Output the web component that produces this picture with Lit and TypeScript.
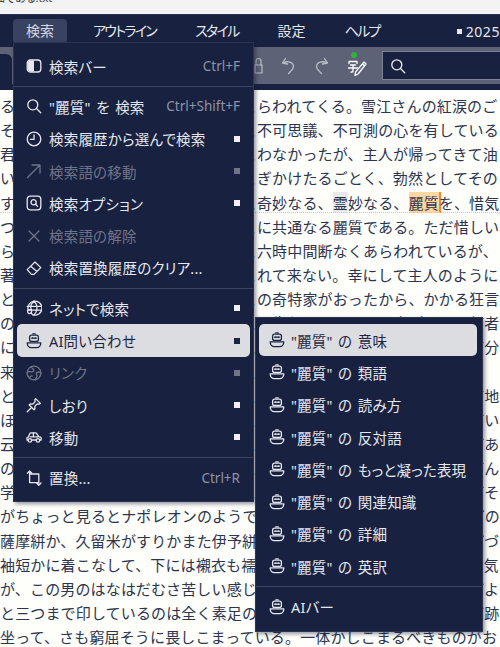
import { LitElement, html, css, svg } from "lit";
import { customElement } from "lit/decorators.js";

const icons: Record<string, any> = {
  panel: svg`<rect x="1.2" y="2" width="13.6" height="12" rx="3"/><path d="M8 2.6H4.2a2.4 2.4 0 0 0-2.4 2.4v6a2.4 2.4 0 0 0 2.4 2.4H8z" fill="currentColor" stroke="none"/>`,
  search: svg`<circle cx="6.8" cy="6.8" r="5"/><path d="M10.5 10.5l4.2 4.2"/>`,
  clock: svg`<circle cx="8" cy="8" r="6.8"/><path d="M8 3.8v4.6H4.4"/>`,
  arrow: svg`<path d="M1.5 14.5L14 2M6 2h8v8"/>`,
  option: svg`<rect x="1.2" y="1.2" width="13.6" height="13.6" rx="3"/><circle cx="7.6" cy="7.2" r="2.6"/><path d="M9.5 9.2l2 2"/>`,
  x: svg`<path d="M3 3l10 10M13 3L3 13"/>`,
  eraser: svg`<path d="M1.2 9.6L9 2l5.8 5.6L8 14.4H5.4zM4.6 6.2l6.4 5.4"/>`,
  net: svg`<path d="M2.2 10A7 7 0 1 1 7 14.9"/><path d="M1.2 6.4h13.6M2 10.2h13M8 1c-4 4-3.4 7.5-2.4 9M8 1c4 4 4 10 0 14"/><circle cx="3.6" cy="11.6" r="2"/><path d="M5 13l1.6 1.6"/>`,
  robot: svg`<rect x="3.6" y="2.2" width="8.8" height="6.2" rx="2"/><path d="M6.8 .9h2.4"/><path d="M6.1 5.2h.9M9 5.2h.9" stroke-width="1.8"/><path d="M1.2 9.8h13.6c0 2.8-1.8 4.9-4.2 4.9H5.4c-2.4 0-4.2-2.1-4.2-4.9z"/>`,
  world: svg`<circle cx="8" cy="8" r="6.9"/><path d="M5 1.8c1 2 3 2 3 3.6S5 7 3.6 6.6 1.4 7 1.4 8M15 8c-2-1.4-4-1.2-4.6 0s1 2 .6 3.4-1.4 2-1.6 3.4M3.4 13c.6-1.8 1.8-2.4 3-2"/>`,
  pin: svg`<path d="M9.6 1.6l4.8 4.8-1.4.8-1.6-.4-2.6 2.6.2 2.4-1 1-4.8-4.8 1-1 2.4.2L9.2 4.6l-.4-1.6zM4.8 11.2L1.2 14.8"/>`,
  car: svg`<path d="M1 11V8.6l1.4-.6 1.4-3.4c.2-.5.6-.8 1.2-.8h4.4c.5 0 .9.2 1.2.6L12.6 7.6l2 .6c.4.2.6.5.6 1V11h-1.4M5.8 11h4.4M1 11h1"/><path d="M4 7.8h8M7.4 4v3.8"/><circle cx="3.9" cy="11.4" r="1.7"/><circle cx="12" cy="11.4" r="1.7"/>`,
  replace: svg`<path d="M3.6 1v3h9.2v9M3.6 4v8.6h9.2M1.4 3.2L3.6 1l2.2 2.2M10.6 13l2.2 2.2L15 13"/>`,
  undo: svg`<path d="M5 2.5L2 7l5 1M2.2 7c5-2.5 10.5-1 10.8 3.5.1 2-1.5 3.5-3 5l-2 2"/>`,
  redo: svg`<path d="M13 2.5L16 7l-5 1M15.8 7c-5-2.5-10.5-1-10.8 3.5-.1 2 1.5 3.5 3 5l2 2"/>`,
};

const icon = (name: string) =>
  html`<svg class="ico" viewBox="0 0 16 16" fill="none" stroke="currentColor" stroke-width="1.3" stroke-linecap="round" stroke-linejoin="round">${icons[name]}</svg>`;

type Row = { i?: string; t?: string; k?: string; m?: boolean; off?: boolean; sel?: boolean; sep?: boolean };

const mainMenu: Row[] = [
  { i: "panel", t: "検索バー", k: "Ctrl+F" },
  { sep: true },
  { i: "search", t: "\"麗質\" を 検索", k: "Ctrl+Shift+F" },
  { i: "clock", t: "検索履歴から選んで検索", m: true },
  { i: "arrow", t: "検索語の移動", m: true, off: true },
  { i: "option", t: "検索オプション", m: true },
  { i: "x", t: "検索語の解除", off: true },
  { i: "eraser", t: "検索置換履歴のクリア..." },
  { sep: true },
  { i: "net", t: "ネットで検索", m: true },
  { i: "robot", t: "AI問い合わせ", m: true, sel: true },
  { i: "world", t: "リンク", m: true, off: true },
  { i: "pin", t: "しおり", m: true },
  { i: "car", t: "移動", m: true },
  { sep: true },
  { i: "replace", t: "置換...", k: "Ctrl+R" },
];

const subMenu: Row[] = [
  { i: "robot", t: "\"麗質\" の 意味", sel: true },
  { i: "robot", t: "\"麗質\" の 類語" },
  { i: "robot", t: "\"麗質\" の 読み方" },
  { i: "robot", t: "\"麗質\" の 反対語" },
  { i: "robot", t: "\"麗質\" の もっと凝った表現" },
  { i: "robot", t: "\"麗質\" の 関連知識" },
  { i: "robot", t: "\"麗質\" の 詳細" },
  { i: "robot", t: "\"麗質\" の 英訳" },
  { sep: true },
  { i: "robot", t: "AIバー" },
];

const FILL =
  "吾輩は猫である名前はまだ無いどこで生れたかとんと見当がつかぬ何でも薄暗いじめじめした所でニャーニャー泣いていた事だけは記憶している吾輩はここで始めて人間というものを見た";
const pad = (a: string, b: string, n = 33) => a + FILL.slice(0, Math.max(0, n - a.length - b.length)) + b;

const lines: string[] = [
  pad("る", "らわれてくる。雪江さんの紅涙のご"),
  pad("そ", "不可思議、不可測の心を有している"),
  pad("君", "わなかったが、主人が帰ってきて油"),
  pad("い", "ぎかけたるごとく、勃然としてその"),
  "",
  pad("つ", "に共通なる麗質である。ただ惜しい"),
  pad("ら", "六時中間断なくあらわれているが、"),
  pad("著", "れて来ない。幸にして主人のように"),
  pad("と", "の奇特家がおったから、かかる狂言"),
  pad("の", "者"),
  pad("に", "分"),
  pad("来", "", 20),
  pad("と", "地"),
  pad("ほ", "い"),
  pad("云", "あ"),
  pad("の", "ん"),
  pad("学", "そ"),
  pad("がちょっと見るとナポレオンのようで", "の"),
  pad("薩摩絣か、久留米がすりかまた伊予絣", "づ"),
  pad("袖短かに着こなして、下には襯衣も襦", "気"),
  pad("が、この男のはなはだむさ苦しい感じ", "よ"),
  pad("と三つまで印しているのは全く素足の", "跡"),
  "坐って、さも窮屈そうに畏しこまっている。一体かしこまるべきものがお",
];

@customElement("app-root")
export class AppRoot extends LitElement {
  static styles = css`
    :host {
      display: block;
      position: relative;
      width: 500px;
      height: 647px;
      overflow: hidden;
      background: #fefefa;
      font-family: "Noto Sans", "Noto Sans CJK JP", sans-serif;
    }
    .title {
      height: 14px;
      background: #f3f3f3;
      overflow: hidden;
      font-size: 11px;
      line-height: 14px;
      color: #333;
      font-feature-settings: "palt";
    }
    .title span { display: block; margin: -9px 0 0 -6px; }
    .menubar {
      height: 33px;
      box-sizing: border-box;
      padding: 4px 0 0 13px;
      background: #18213f;
      border-top: 1px solid #2b3350;
      display: flex;
      gap: 13px;
      color: #e6e8ee;
      font-size: 14px;
      font-feature-settings: "palt";
      white-space: nowrap;
    }
    .mi { height: 24px; line-height: 24px; padding: 0 13px; border-radius: 4px; }
    .mi.on { background: #3a4262; color: #d5d8e0; }
    .mi.kana { letter-spacing: -1.7px; }
    .year { margin-left: 51px; display: flex; align-items: center; height: 24px; gap: 4px; letter-spacing: .6px; }
    .year i { width: 5px; height: 5px; background: #e6e8ee; display: block; }
    .toolbar {
      height: 37px;
      background: #5e6277;
      position: relative;
      display: flex;
      align-items: center;
      color: #b9bcc8;
    }
    .tb-left { width: 12px; height: 30px; align-self: flex-end; background: #18213f; border-top-right-radius: 6px; }
    .tb-lock { width: 9px; height: 17px; margin-left: 242px; }
    .tb-icon { width: 19px; height: 19px; margin-left: 17px; }
    .tb-icon + .tb-icon { margin-left: 12px; }
    .tb-pen { position: relative; margin-left: 16px; width: 22px; height: 26px; color: #fff; display: block; }
    .dot { position: absolute; left: 5px; top: -1px; width: 6px; height: 6px; border-radius: 50%; background: #2fb43a; }
    .sbox {
      margin-left: 14px;
      flex: 1;
      height: 29px;
      box-sizing: border-box;
      background: #18213f;
      border: 1px solid #7d8194;
      border-right: 0;
      color: #f0f0f4;
      display: flex;
      align-items: center;
      padding-left: 7px;
    }
    .gap { height: 6px; background: #18213f; }
    .editor { padding-top: 4px; color: #2c3450; font-family: "Noto Sans CJK JP", sans-serif; font-size: 15px; letter-spacing: .15px; }
    .ln { height: 24.15px; line-height: 24.15px; white-space: nowrap; position: relative; }
    .ln.cur::after {
      content: "";
      position: absolute;
      left: 0;
      right: 0;
      top: 21px;
      border-bottom: 1px dotted #f2c48c;
    }
    .hl { background: #fcd7a3; box-shadow: 2px 0 0 #ee8a2e; }
    .hl2 { background: #e9e9ea; }
    .menu {
      position: absolute;
      box-sizing: border-box;
      background: #18213f;
      color: #e6e8ee;
      font-size: 14.5px;
      letter-spacing: .2px;
      word-spacing: 1.5px;
      font-feature-settings: "palt";
      box-shadow: 2px 2px 4px rgba(20, 25, 50, .45);
      border: 1px solid #2c3452;
    }
    .m1 { left: 13px; top: 42px; width: 241px; height: 460px; padding-top: 7px; }
    .m2 { left: 255px; top: 317px; width: 228px; height: 315px; padding-top: 6px; }
    .row {
      height: 32.3px;
      box-sizing: border-box;
      margin: 0 3px;
      padding: 0 10px 0 9px;
      display: flex;
      align-items: center;
      gap: 7px;
      border-radius: 5px;
      white-space: nowrap;
    }
    .m2 .row { margin: 0 5px 0 3px; padding-left: 10px; gap: 6px; }
    .row.off { color: #6f7489; }
    .row.sel { background: #dcdde0; color: #1d2545; }
    .ico { width: 16px; height: 16px; flex: none; display: block; }
    .ico-sm { width: 100%; height: 100%; }
    .txt { flex: 1; }
    .key { font-size: 13.5px; color: #8f94a6; letter-spacing: 0; }
    .mark { width: 6px; height: 6px; background: currentColor; }
    .sep { height: 8px; display: flex; align-items: center; }
    .sep::before { content: ""; flex: 1; height: 1px; background: #3c4463; }
    .row:not(.sel):not(.off) .mark { background: #eef0f4; }
  `;

  private rows(list: Row[]) {
    return list.map((r) =>
      r.sep
        ? html`<div class="sep"></div>`
        : html`<div class="row ${r.off ? "off" : ""} ${r.sel ? "sel" : ""}">
            ${icon(r.i!)}<span class="txt">${r.t}</span>
            ${r.k ? html`<span class="key">${r.k}</span>` : ""}
            ${r.m ? html`<span class="mark"></span>` : ""}
          </div>`
    );
  }

  render() {
    const cur = html`す${FILL.slice(0, 16)}奇妙なる、<span class="hl2">霊</span>妙なる、<span class="hl">麗質</span>を、惜気`;
    return html`
      <div class="title"><span>猫である.txt</span></div>
      <div class="menubar">
        <div class="mi on">検索</div>
        <div class="mi kana">アウトライン</div>
        <div class="mi kana">スタイル</div>
        <div class="mi">設定</div>
        <div class="mi kana">ヘルプ</div>
        <div class="year"><i></i>2025</div>
      </div>
      <div class="toolbar">
        <div class="tb-left"></div>
        <svg class="tb-lock" viewBox="0 0 9 17" fill="none" stroke="currentColor" stroke-width="1.2"><path d="M1 8h7v8H1zM2 8V4a2.5 2.5 0 0 1 5 0v4"/></svg>
        <svg class="tb-icon" viewBox="0 0 18 19" fill="none" stroke="currentColor" stroke-width="1.3" stroke-linecap="round" stroke-linejoin="round">${icons.undo}</svg>
        <svg class="tb-icon" viewBox="0 0 18 19" fill="none" stroke="currentColor" stroke-width="1.3" stroke-linecap="round" stroke-linejoin="round">${icons.redo}</svg>
        <div class="tb-pen">
          <span class="dot"></span>
          <svg class="ico-sm" viewBox="0 0 22 26" fill="none" stroke="currentColor" stroke-width="1.3" stroke-linecap="round" stroke-linejoin="round">
            <path d="M3 8.5h8M3 8.5v2M11 8.5v2M4.5 12h5M2.5 15h9M7 12v6c0 1-.6 1.2-2 1"/>
            <path d="M18 9l2 2-8 10-3 1.5.5-3.3zM16.5 11l2 2"/>
          </svg>
        </div>
        <div class="sbox">${icon("search")}</div>
      </div>
      <div class="gap"></div>
      <div class="editor">
        ${lines.map((l, i) =>
          i === 4 ? html`<div class="ln cur">${cur}</div>` : html`<div class="ln">${l}</div>`
        )}
      </div>
      <div class="menu m1">${this.rows(mainMenu)}</div>
      <div class="menu m2">${this.rows(subMenu)}</div>
    `;
  }
}
